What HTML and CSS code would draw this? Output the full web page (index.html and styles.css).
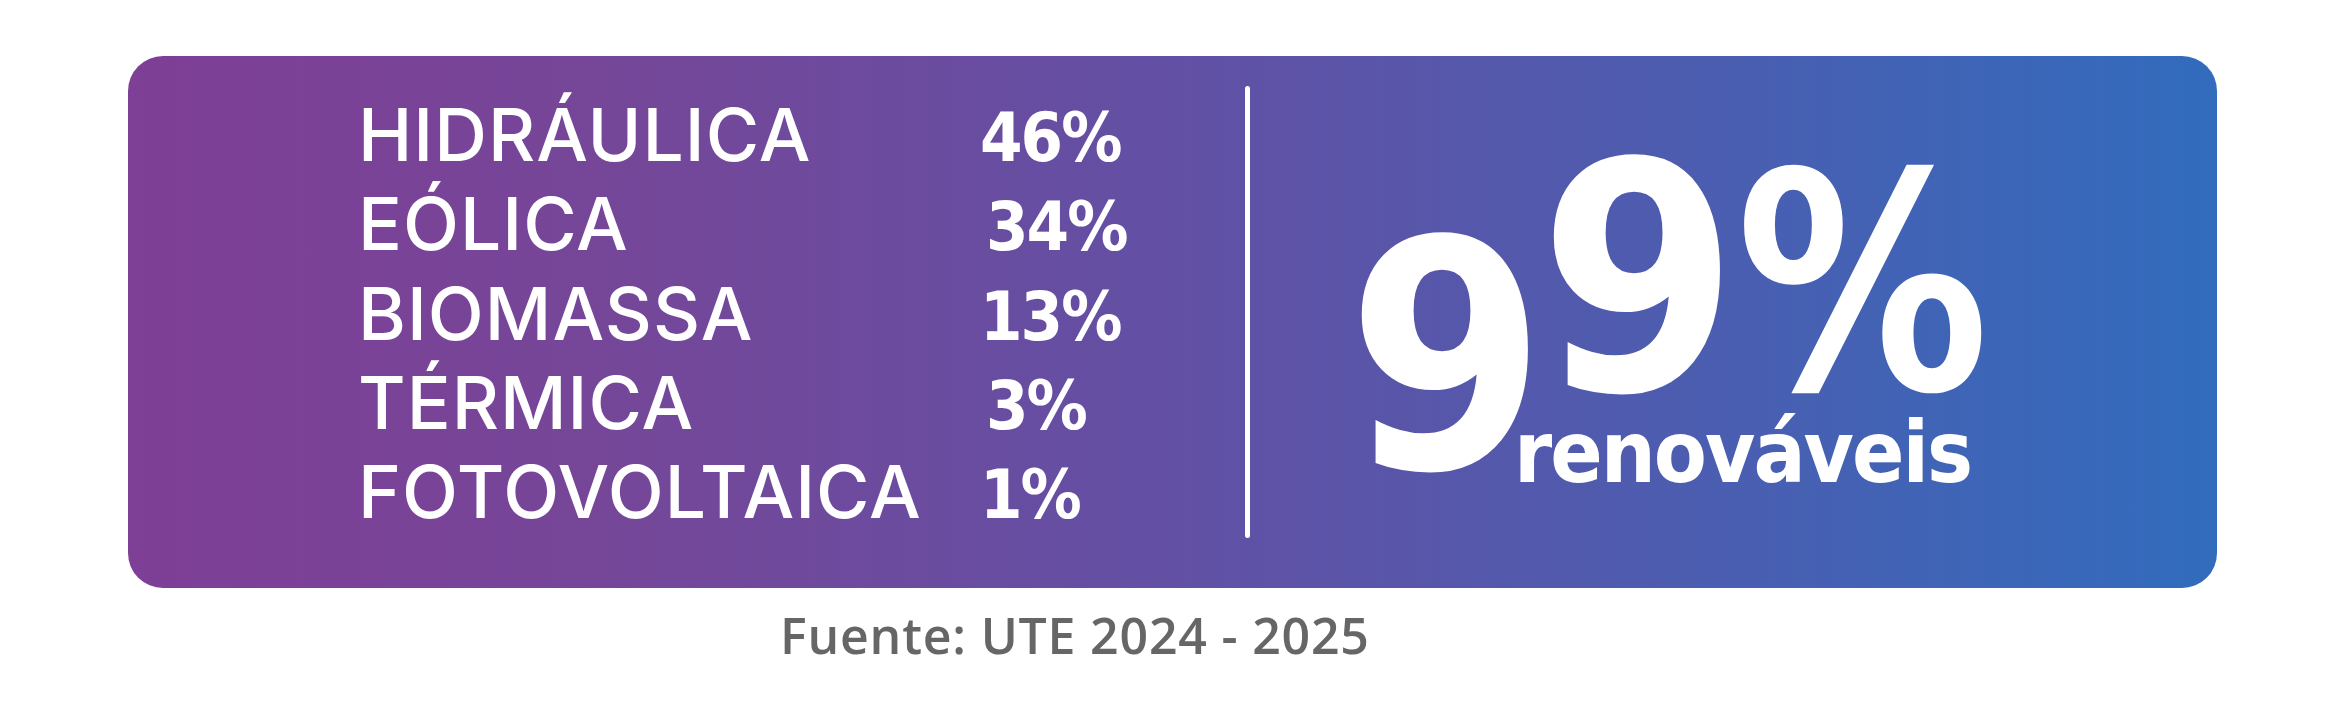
FILE: index.html
```html
<!DOCTYPE html>
<html lang="es">
<head>
<meta charset="utf-8">
<title>Matriz energética</title>
<link rel="stylesheet" href="styles.css">
</head>
<body>
<div class="page">
  <section class="card">
    <div class="sources">
      <div class="row"><span class="label">HIDRÁULICA</span><span class="pct">46%</span></div>
      <div class="row"><span class="label">EÓLICA</span><span class="pct pct-34">34%</span></div>
      <div class="row"><span class="label">BIOMASSA</span><span class="pct">13%</span></div>
      <div class="row"><span class="label">TÉRMICA</span><span class="pct pct-3">3%</span></div>
      <div class="row"><span class="label">FOTOVOLTAICA</span><span class="pct">1%</span></div>
    </div>
    <div class="divider"></div>
    <div class="total">
      <span class="big n1">9</span>
      <div class="stack">
        <div class="top"><span class="big n2">9</span><span class="big sign">%</span></div>
        <div class="ren">renováveis</div>
      </div>
    </div>
  </section>
  <p class="source">Fuente: UTE 2024 - 2025</p>
</div>
</body>
</html>
```

FILE: styles.css
```css
html, body {
  margin: 0;
  padding: 0;
  background: #ffffff;
}

.page {
  width: 2336px;
  height: 701px;
  padding-top: 56px;
  box-sizing: border-box;
}

.card {
  margin-left: 128px;
  width: 2089px;
  height: 532px;
  border-radius: 35px;
  background: linear-gradient(90deg, #7e3f96 0%, #744799 25%, #6250a4 50%, #4c5db0 75%, #326cbd 100%);
  display: flex;
  align-items: flex-start;
  color: #ffffff;
}

.sources {
  flex: 0 0 auto;
  width: 887px;
  padding-left: 230px;
  padding-top: 34px;
}

.row {
  display: grid;
  grid-template-columns: 622px auto;
  align-items: baseline;
  height: 89.25px;
}

.label {
  font-family: "Inter", "Open Sans", sans-serif;
  font-weight: 500;
  font-size: 73px;
  line-height: 89.25px;
  letter-spacing: 1px;
}

.pct {
  font-family: "DejaVu Sans Condensed", "DejaVu Sans", sans-serif;
  font-stretch: condensed;
  font-weight: 700;
  font-size: 68px;
  line-height: 89.25px;
  letter-spacing: -2px;
}

.pct-34 { padding-left: 6px; }
.pct-3 { padding-left: 6px; }

.divider {
  flex: 0 0 auto;
  width: 5px;
  height: 452px;
  margin-top: 30px;
  background: #ffffff;
  border-radius: 3px;
}

.total {
  display: flex;
  align-items: flex-start;
  margin-left: 97px;
}

.big {
  font-family: "DejaVu Sans Condensed", "DejaVu Sans", sans-serif;
  font-stretch: condensed;
  font-weight: 700;
  font-size: 318px;
  line-height: 0.75em;
  display: block;
}

.n1 {
  margin-top: 183px;
  margin-right: -7px;
}

.stack {
  display: flex;
  flex-direction: column;
  margin-top: 105px;
}

.top {
  display: flex;
  align-items: flex-end;
}

.sign {
  font-size: 302px;
  margin-left: -2px;
  margin-bottom: 1px;
  transform: scaleX(0.93);
  transform-origin: left bottom;
}

.ren {
  font-family: "DejaVu Sans Condensed", "DejaVu Sans", sans-serif;
  font-stretch: condensed;
  font-weight: 700;
  font-size: 86px;
  line-height: 86px;
  margin-top: 9.5px;
  margin-left: -25px;
  letter-spacing: -2px;
}

.source {
  margin: 0;
  padding-left: 780px;
  padding-top: 13px;
  font-family: "Open Sans", sans-serif;
  font-weight: 600;
  font-size: 50px;
  line-height: 68px;
  color: #666666;
  letter-spacing: 0.8px;
}
```
